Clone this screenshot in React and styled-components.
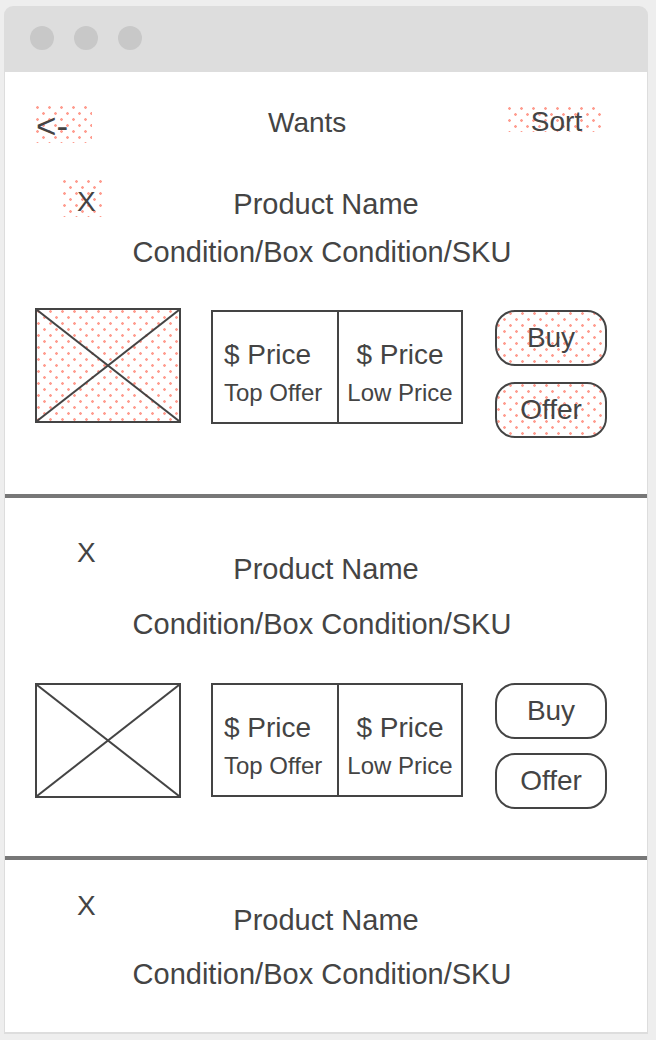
import React from 'react';
import styled, { createGlobalStyle, css } from 'styled-components';

const GlobalStyle = createGlobalStyle`
  html, body {
    margin: 0;
    padding: 0;
    background: #eeeeee;
  }
  body {
    font-family: "Liberation Sans", Arial, sans-serif;
    color: #444;
  }
`;

// pink dotted fill used to mark the highlighted parts of the wireframe
const dots = css`
  background-color: #fff;
  background-image:
    radial-gradient(circle at 1.5px 1.5px, #ff9d90 1px, transparent 1.6px),
    radial-gradient(circle at 1.5px 1.5px, #ff9d90 1px, transparent 1.6px);
  background-size: 12px 12px;
  background-position: 0 0, 6px 6px;
`;

const Window = styled.div`
  width: 644px;
  margin: 6px 0 0 4px;
  padding: 0 1px 2px;
  box-sizing: border-box;
  border-radius: 9px 9px 0 0;
  background: #dddddd;
`;

const TitleBar = styled.div`
  height: 66px;
  box-sizing: border-box;
  display: flex;
  align-items: flex-start;
  gap: 20px;
  padding: 20px 0 0 25px;
`;

const Light = styled.span`
  width: 24px;
  height: 24px;
  border-radius: 50%;
  background: #c8c8c8;
`;

const Screen = styled.main`
  height: 960px;
  overflow: hidden;
  background: #fff;
`;

const Header = styled.header`
  height: 71px;
  box-sizing: border-box;
  display: flex;
  align-items: flex-start;
  padding: 34px 44px 0 31px;
  font-size: 28px;
  line-height: 1;
`;

const BackBox = styled.div`
  width: 56px;
  height: 37px;
  box-sizing: border-box;
  padding-top: 2px;
  font-size: 35px;
  white-space: nowrap;
  ${dots}
`;

const Title = styled.h1`
  margin: 3px 0 0 176px;
  font: inherit;
`;

const SortBox = styled.div`
  margin: 1px 0 0 auto;
  width: 95px;
  height: 25px;
  box-sizing: border-box;
  padding: 1px 0 0 2px;
  text-align: center;
  white-space: nowrap;
  ${dots}
`;

const Item = styled.section`
  padding: ${(p) => p.$top}px 0 ${(p) => p.$bottom}px;
  border-bottom: ${(p) => (p.$last ? 'none' : '4px solid #777')};
`;

const Head = styled.div`
  display: grid;
  grid-template-columns: 1fr auto 1fr;
  align-items: start;
`;

const CloseBox = styled.div`
  justify-self: start;
  margin-left: 58px;
  width: 41px;
  height: 37px;
  box-sizing: border-box;
  padding: 8px 0 0 14px;
  font-size: 28px;
  line-height: 1;
  ${(p) => p.$marked && dots}
`;

const Titles = styled.div`
  text-align: center;
  font-size: 29px;
  line-height: 1;
  white-space: nowrap;
`;

const Name = styled.div`
  margin-top: ${(p) => p.$offset}px;
`;

const Meta = styled.div`
  margin-top: ${(p) => p.$gap}px;
  padding-right: 8px;
`;

const Body = styled.div`
  display: flex;
  align-items: flex-start;
  margin-top: ${(p) => p.$gap}px;
  padding-left: 30px;
`;

const Thumb = styled.div`
  width: 146px;
  height: 115px;
  box-sizing: border-box;
  border: 2px solid #444;
  ${(p) => p.$marked && dots}

  svg {
    display: block;
    width: 100%;
    height: 100%;
  }
`;

const PriceBox = styled.div`
  display: flex;
  margin: ${(p) => p.$drop}px 0 0 30px;
  width: 252px;
  height: 114px;
  box-sizing: border-box;
  border: 2px solid #444;
`;

const PriceCol = styled.div`
  flex: 0 0 50%;
  box-sizing: border-box;
  display: flex;
  flex-direction: column;
  align-items: ${(p) => (p.$start ? 'flex-start' : 'center')};
  padding: 29px 0 0 ${(p) => (p.$start ? 11 : 0)}px;
  line-height: 1;
  white-space: nowrap;

  & + & {
    border-left: 2px solid #444;
  }
`;

const Amount = styled.div`
  font-size: 28px;
`;

const Caption = styled.div`
  margin-top: 12px;
  font-size: 24px;
`;

const Actions = styled.div`
  display: flex;
  flex-direction: column;
  gap: ${(p) => p.$gap}px;
  margin: ${(p) => p.$drop}px 0 0 32px;
`;

const ActionButton = styled.button`
  width: 112px;
  height: 56px;
  padding: 0;
  border: 2px solid #444;
  border-radius: 20px;
  background: #fff;
  color: #444;
  font: 28px/1 "Liberation Sans", Arial, sans-serif;
  ${(p) => p.$marked && dots}
`;

const Placeholder = () => (
  <svg viewBox="0 0 100 100" preserveAspectRatio="none">
    <line x1="0" y1="0" x2="100" y2="100" stroke="#444" strokeWidth="2" vectorEffect="non-scaling-stroke" />
    <line x1="100" y1="0" x2="0" y2="100" stroke="#444" strokeWidth="2" vectorEffect="non-scaling-stroke" />
  </svg>
);

const items = [
  { top: 37, nameOffset: 10, metaGap: 19, bodyGap: 41, drop: 2, actionGap: 16, bottom: 56, marked: true, body: true },
  { top: 33, nameOffset: 24, metaGap: 26, bodyGap: 44, drop: 0, actionGap: 14, bottom: 47, body: true },
  { top: 24, nameOffset: 22, metaGap: 25, bottom: 43, last: true },
];

const WantItem = ({ top, nameOffset, metaGap, bodyGap, drop, actionGap, bottom, marked, body, last }) => (
  <Item $top={top} $bottom={bottom} $last={last}>
    <Head>
      <CloseBox $marked={marked}>X</CloseBox>
      <Titles>
        <Name $offset={nameOffset}>Product Name</Name>
        <Meta $gap={metaGap}>Condition/Box Condition/SKU</Meta>
      </Titles>
    </Head>
    {body && (
      <Body $gap={bodyGap}>
        <Thumb $marked={marked}>
          <Placeholder />
        </Thumb>
        <PriceBox $drop={drop}>
          <PriceCol $start>
            <Amount>$ Price</Amount>
            <Caption>Top Offer</Caption>
          </PriceCol>
          <PriceCol>
            <Amount>$ Price</Amount>
            <Caption>Low Price</Caption>
          </PriceCol>
        </PriceBox>
        <Actions $gap={actionGap} $drop={drop}>
          <ActionButton $marked={marked}>Buy</ActionButton>
          <ActionButton $marked={marked}>Offer</ActionButton>
        </Actions>
      </Body>
    )}
  </Item>
);

export default function App() {
  return (
    <>
      <GlobalStyle />
      <Window>
        <TitleBar>
          <Light />
          <Light />
          <Light />
        </TitleBar>
        <Screen>
          <Header>
            <BackBox>&lt;-</BackBox>
            <Title>Wants</Title>
            <SortBox>Sort</SortBox>
          </Header>
          {items.map((item, i) => (
            <WantItem key={i} {...item} />
          ))}
        </Screen>
      </Window>
    </>
  );
}
